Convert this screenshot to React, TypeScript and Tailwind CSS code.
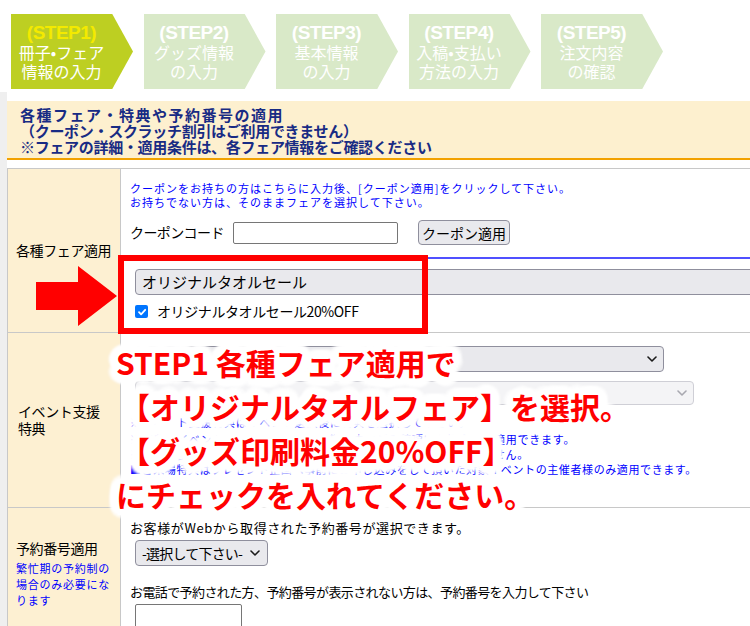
import React from 'react';

const steps = [
  { n: '(STEP1)', l1: '冊子•フェア', l2: '情報の入力', active: true },
  { n: '(STEP2)', l1: 'グッズ情報', l2: 'の入力', active: false },
  { n: '(STEP3)', l1: '基本情報', l2: 'の入力', active: false },
  { n: '(STEP4)', l1: '入稿•支払い', l2: '方法の入力', active: false },
  { n: '(STEP5)', l1: '注文内容', l2: 'の確認', active: false },
];

const Chevron = ({ light }: { light?: boolean }) => (
  <svg width="10" height="6" viewBox="0 0 10 6" className={light ? 'text-[#a8a8b0]' : 'text-[#1a1a1a]'}>
    <path d="M1 1l4 4 4-4" fill="none" stroke="currentColor" strokeWidth="1.6" strokeLinecap="round" strokeLinejoin="round" />
  </svg>
);

export default function App() {
  return (
    <div className="relative w-[750px] h-[626px] overflow-hidden bg-white font-['Noto_Sans_CJK_JP',sans-serif] text-black">
      {/* step bar */}
      <div className="flex gap-[10.5px] pl-[11px] pt-[14px] h-[92px]">
        {steps.map((s) => (
          <div
            key={s.n}
            className={
              'w-[122px] h-[75px] shrink-0 [clip-path:polygon(0_0,83%_0,100%_50%,83%_100%,0_100%)] ' +
              (s.active ? 'bg-[#bdcf22]' : 'bg-[#d9e9c8]')
            }
          >
            <div className="w-[101px] flex flex-col items-center pt-[9px]">
              <div
                className={
                  "font-['Liberation_Sans',Arial,sans-serif] font-black text-[19px] leading-[20px] tracking-[-0.5px] " +
                  (s.active ? 'text-[#f4ea00]' : 'text-white')
                }
              >
                {s.n}
              </div>
              <div className="text-white text-[16px] leading-[19px] whitespace-nowrap">{s.l1}</div>
              <div className="text-white text-[16px] leading-[19px] whitespace-nowrap">{s.l2}</div>
            </div>
          </div>
        ))}
      </div>

      <div className="flex">
        <div className="w-[7px] h-[534px] shrink-0 bg-[#efefef]" />
        <div className="flex-1 min-w-0">
          {/* notice */}
          <div className="mt-[9px] h-[59px] bg-[#fdf0cf] border-b-2 border-[#f2a100] pl-[13px] pt-[6px] text-[15px] leading-[16px] font-bold text-[#182b84] whitespace-nowrap">
            <div className="tracking-[1.5px]">各種フェア・特典や予約番号の適用</div>
            <div className="tracking-[-0.3px]">（クーポン・スクラッチ割引はご利用できません）</div>
            <div className="tracking-[-0.3px]">※フェアの詳細・適用条件は、各フェア情報をご確認ください</div>
          </div>

          {/* table */}
          <div className="mt-[8px] w-[760px]">
            {/* row 1 */}
            <div className="flex h-[164px] border-t border-[#c8c8c8]">
              <div className="w-[114px] shrink-0 border-l border-r border-[#c8c8c8] bg-[#fdf0d2] flex items-center pl-[8px] text-[14px] tracking-[-0.4px]">
                各種フェア適用
              </div>
              <div className="flex-1 pl-[9px] pt-[12px]">
                <div className="text-[11px] leading-[14px] tracking-[1px] text-[#0000ff] whitespace-nowrap">
                  <div>クーポンをお持ちの方はこちらに入力後、[クーポン適用]をクリックして下さい。</div>
                  <div>お持ちでない方は、そのままフェアを選択して下さい。</div>
                </div>
                <div className="mt-[11px] flex items-center h-[25px]">
                  <span className="w-[103px] text-[14px] tracking-[-0.6px]">クーポンコード</span>
                  <div className="w-[165px] h-[22px] border border-[#767676] rounded-[2px] bg-white" />
                  <button className="ml-[20px] w-[92px] h-[25px] bg-[#e9e9ed] border border-[#8f8f9d] rounded-[4px] text-[14px] leading-none">
                    クーポン適用
                  </button>
                </div>
                <div className="mt-[12px] -ml-[9px] h-[2px] bg-[#5050ff]" />
                <div className="mt-[10px] ml-[5px] w-[640px] h-[26px] bg-[#e9e9ed] border border-[#8f8f9d] rounded-[4px] flex items-center pl-[6px] text-[15px]">
                  オリジナルタオルセール
                </div>
                <div className="mt-[10px] flex items-center h-[13px]">
                  <div className="ml-[5px] w-[13px] h-[13px] rounded-[2px] bg-[#0075ff] flex items-center justify-center">
                    <svg width="10" height="10" viewBox="0 0 10 10">
                      <path d="M2 5.2l2.1 2.1L8.2 2.8" fill="none" stroke="#fff" strokeWidth="1.8" strokeLinecap="round" strokeLinejoin="round" />
                    </svg>
                  </div>
                  <span className="ml-[9px] text-[14px] tracking-[-0.4px]">オリジナルタオルセール20%OFF</span>
                </div>
              </div>
            </div>

            {/* row 2 */}
            <div className="flex h-[175px] border-t border-[#c8c8c8]">
              <div className="w-[114px] shrink-0 border-l border-r border-[#c8c8c8] bg-[#fdf0d2] flex items-center pl-[10px] text-[14px] leading-[17px] tracking-[-0.4px]">
                <div>
                  イベント支援
                  <br />
                  特典
                </div>
              </div>
              <div className="flex-1 pl-[9px] pt-[13px]">
                <div className="ml-[5px] w-[529px] h-[26px] bg-[#e9e9ed] border border-[#8f8f9d] rounded-[4px] flex items-center justify-end pr-[6px]">
                  <Chevron />
                </div>
                <div className="mt-[9px] ml-[5px] w-[559px] h-[24px] bg-[#f4f4f6] border border-[#cfcfd6] rounded-[4px] flex items-center justify-end pr-[6px]">
                  <Chevron light />
                </div>
                <div className="mt-[10px] text-[11px] leading-[14px] tracking-[0.75px] text-[#0000ff] whitespace-nowrap">
                  ※イベント支援特典はイベント選択後に特典を選択して下さい。
                </div>
                <div className="mt-[3px] text-[11px] leading-[15px] tracking-[0.75px] text-[#0000ff] whitespace-nowrap">
                  <div>※特典はイベント毎に定められた申込期間内にご入稿頂いた場合のみ適用できます。</div>
                  <div>※フェア割引と一部のイベント支援特典は他の割引との併用はできません。</div>
                  <div className="tracking-[0.6px]">■ご来場特典はプレゼント企画へ事前にお申し込みをして頂いた対象イベントの主催者様のみ適用できます。</div>
                </div>
              </div>
            </div>

            {/* row 3 */}
            <div className="flex h-[140px] border-t border-[#c8c8c8]">
              <div className="w-[114px] shrink-0 border-l border-r border-[#c8c8c8] bg-[#fdf0d2] pl-[8px] pt-[31px]">
                <div className="text-[14px] leading-[18px] tracking-[-0.4px]">予約番号適用</div>
                <div className="mt-[3px] text-[11px] leading-[16px] tracking-[0.75px] text-[#0000ff]">
                  繁忙期の予約制の
                  <br />
                  場合のみ必要にな
                  <br />
                  ります
                </div>
              </div>
              <div className="flex-1 pl-[9px] pt-[11px]">
                <div className="text-[13px] leading-[18px] tracking-[0.6px] whitespace-nowrap">
                  お客様がWebから取得された予約番号が選択できます。
                </div>
                <div className="mt-[3px] ml-[5px] w-[133px] h-[26px] bg-[#e9e9ed] border border-[#8f8f9d] rounded-[4px] flex items-center justify-between pl-[6px] pr-[7px] text-[14px] tracking-[-0.8px] whitespace-nowrap">
                  <span>-選択して下さい-</span>
                  <Chevron />
                </div>
                <div className="mt-[17px] text-[13px] leading-[18px] tracking-[-0.6px] whitespace-nowrap">
                  お電話で予約された方、予約番号が表示されない方は、予約番号を入力して下さい
                </div>
                <div className="mt-[3px] ml-[5px] w-[107px] h-[26px] border border-[#767676] rounded-[2px] bg-white" />
              </div>
            </div>
          </div>
        </div>
      </div>

      {/* red annotation box */}
      <div className="absolute left-[118px] top-[255px] w-[310px] h-[79px] border-[6px] border-[#ff0000]" />

      {/* red arrow */}
      <svg className="absolute left-[36px] top-[266px]" width="81" height="60" viewBox="0 0 81 60">
        <polygon points="0,16 42,16 42,0 81,30 42,60 42,44 0,44" fill="#ff0000" />
      </svg>

      {/* overlay instruction text */}
      <div className="absolute left-[116px] top-[340px] text-[30px] leading-[44px] font-bold text-[#ff0000] whitespace-nowrap [text-shadow:0_0_4px_#fff,9px_0_3px_#fff,8.3px_3.4px_3px_#fff,6.4px_6.4px_3px_#fff,3.4px_8.3px_3px_#fff,0_9px_3px_#fff,-3.4px_8.3px_3px_#fff,-6.4px_6.4px_3px_#fff,-8.3px_3.4px_3px_#fff,-9px_0_3px_#fff,-8.3px_-3.4px_3px_#fff,-6.4px_-6.4px_3px_#fff,-3.4px_-8.3px_3px_#fff,0_-9px_3px_#fff,3.4px_-8.3px_3px_#fff,6.4px_-6.4px_3px_#fff,8.3px_-3.4px_3px_#fff,6px_0_1px_#fff,5.5px_2.3px_1px_#fff,4.2px_4.2px_1px_#fff,2.3px_5.5px_1px_#fff,0_6px_1px_#fff,-2.3px_5.5px_1px_#fff,-4.2px_4.2px_1px_#fff,-5.5px_2.3px_1px_#fff,-6px_0_1px_#fff,-5.5px_-2.3px_1px_#fff,-4.2px_-4.2px_1px_#fff,-2.3px_-5.5px_1px_#fff,0_-6px_1px_#fff,2.3px_-5.5px_1px_#fff,4.2px_-4.2px_1px_#fff,5.5px_-2.3px_1px_#fff,3px_0_0_#fff,-3px_0_0_#fff,0_3px_0_#fff,0_-3px_0_#fff,2px_2px_0_#fff,-2px_2px_0_#fff,2px_-2px_0_#fff,-2px_-2px_0_#fff]">
        <div>STEP1 各種フェア適用で</div>
        <div className="ml-[4px]">【オリジナルタオルフェア】を選択。</div>
        <div className="ml-[4px]">【グッズ印刷料金20%OFF】</div>
        <div>にチェックを入れてください。</div>
      </div>
    </div>
  );
}
